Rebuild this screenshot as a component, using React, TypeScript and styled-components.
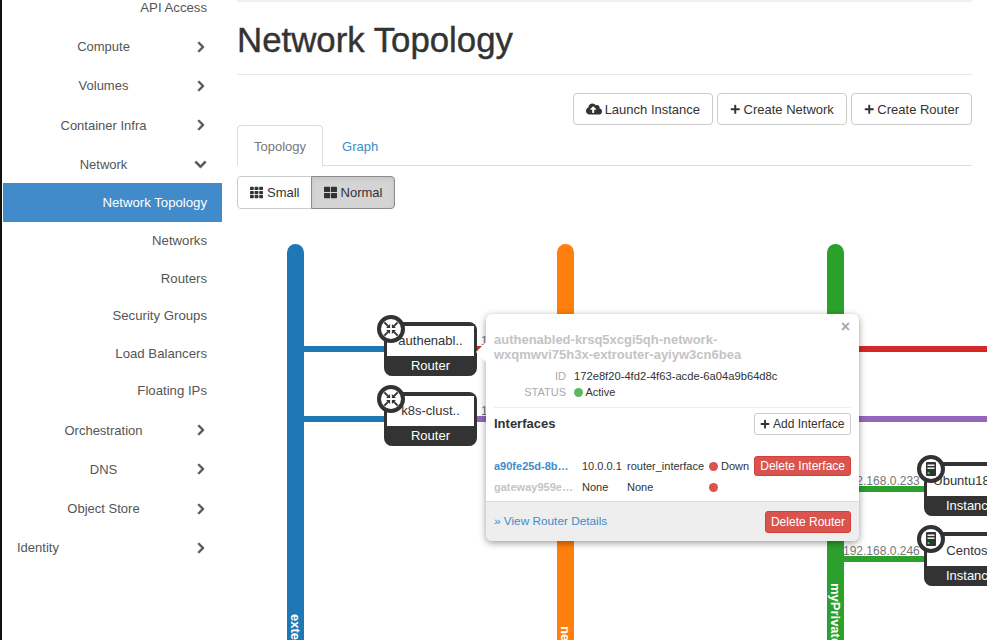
import React from 'react';
import styled, { createGlobalStyle } from 'styled-components';
import {
  FaChevronDown,
  FaChevronRight,
  FaCloudUploadAlt,
  FaPlus,
  FaTh,
  FaThLarge,
} from 'react-icons/fa';

const GlobalStyle = createGlobalStyle`
  html, body {
    margin: 0;
    padding: 0;
    background: #fff;
  }
  body {
    font-family: "Liberation Sans", Arial, sans-serif;
    font-size: 13px;
    color: #333;
  }
`;

const menu = [
  { label: 'API Access', sub: true },
  { label: 'Compute', arrow: 'right' },
  { label: 'Volumes', arrow: 'right' },
  { label: 'Container Infra', arrow: 'right' },
  { label: 'Network', arrow: 'down' },
  { label: 'Network Topology', sub: true, active: true },
  { label: 'Networks', sub: true },
  { label: 'Routers', sub: true },
  { label: 'Security Groups', sub: true },
  { label: 'Load Balancers', sub: true },
  { label: 'Floating IPs', sub: true },
  { label: 'Orchestration', arrow: 'right' },
  { label: 'DNS', arrow: 'right' },
  { label: 'Object Store', arrow: 'right' },
  { label: 'Identity', arrow: 'right', left: true },
];

const RouterIcon = () => (
  <svg width="16" height="16" viewBox="0 0 18 18" fill="#333">
    <g stroke="#333" strokeWidth="2.2">
      <path d="M1.5 1.5 L6 6" />
      <path d="M16.5 1.5 L12 6" />
      <path d="M1.5 16.5 L6 12" />
      <path d="M16.5 16.5 L12 12" />
    </g>
    <path d="M8 3.5 L8 8 L3.5 8 Z" />
    <path d="M10 3.5 L10 8 L14.5 8 Z" />
    <path d="M8 14.5 L8 10 L3.5 10 Z" />
    <path d="M10 14.5 L10 10 L14.5 10 Z" />
  </svg>
);

const InstanceIcon = () => (
  <svg width="10" height="14" viewBox="0 0 10 14">
    <rect x="0" y="0" width="10" height="14" rx="1" fill="#333" />
    <rect x="1.5" y="2.5" width="7" height="1.4" fill="#fff" />
    <rect x="1.5" y="5.5" width="7" height="1.4" fill="#fff" />
    <circle cx="2.6" cy="11.2" r="1.1" fill="#2ecc40" />
  </svg>
);

const Router = ({ name, top }: { name: string; top: number }) => (
  <Node $left={147} $top={top}>
    <NodeBadge>
      <RouterIcon />
    </NodeBadge>
    <NodeName>{name}</NodeName>
    <NodeType>Router</NodeType>
  </Node>
);

const Instance = ({ name, top }: { name: string; top: number }) => (
  <Node $left={687} $top={top}>
    <NodeBadge>
      <InstanceIcon />
    </NodeBadge>
    <NodeName>{name}</NodeName>
    <NodeType>Instance</NodeType>
  </Node>
);

export default function App() {
  return (
    <Page>
      <GlobalStyle />
      <Sidebar>
        {menu.map((item) => (
          <MenuItem
            key={item.label}
            $sub={item.sub}
            $active={item.active}
            $left={item.left}
            $first={item.label === 'API Access'}
          >
            <MenuLabel $sub={item.sub} $left={item.left}>
              {item.label}
            </MenuLabel>
            {item.arrow === 'right' && (
              <Chevron>
                <FaChevronRight size={12} />
              </Chevron>
            )}
            {item.arrow === 'down' && (
              <Chevron>
                <FaChevronDown size={13} />
              </Chevron>
            )}
          </MenuItem>
        ))}
      </Sidebar>

      <Main>
        <Title>Network Topology</Title>
        <Actions>
          <Button>
            <FaCloudUploadAlt size={16} /> Launch Instance
          </Button>
          <Button>
            <FaPlus size={10.5} /> Create Network
          </Button>
          <Button>
            <FaPlus size={10.5} /> Create Router
          </Button>
        </Actions>

        <Tabs>
          <Tab $active>Topology</Tab>
          <Tab>Graph</Tab>
        </Tabs>

        <Toggle>
          <ToggleItem>
            <FaTh size={13} /> Small
          </ToggleItem>
          <ToggleItem $active>
            <FaThLarge size={13} /> Normal
          </ToggleItem>
        </Toggle>

        <Canvas>
          <NetworkBar $left={50} $color="#1f77b4">
            <NetworkName $offset={370}>external</NetworkName>
          </NetworkBar>
          <NetworkBar $left={320} $color="#ff7f0e">
            <NetworkName $offset={382}>network</NetworkName>
          </NetworkBar>
          <NetworkBar $left={590} $color="#2ca02c">
            <NetworkName $offset={339}>myPrivate</NetworkName>
          </NetworkBar>

          <Link $left={67} $top={102} $width={90} $color="#1f77b4" />
          <Link $left={67} $top={172} $width={90} $color="#1f77b4" />
          <Link $left={240} $top={102} $width={520} $color="#d62728" />
          <Link $left={240} $top={172} $width={520} $color="#9467bd" />
          <Link $left={607} $top={242} $width={90} $color="#2ca02c" />
          <Link $left={607} $top={312} $width={90} $color="#2ca02c" />

          <IpLabel $left={244} $top={90}>172.24.4.212</IpLabel>
          <IpLabel $left={244} $top={160}>172.24.4.135</IpLabel>
          <IpLabel $left={606} $top={230}>192.168.0.233</IpLabel>
          <IpLabel $left={606} $top={300}>192.168.0.246</IpLabel>

          <Router name="authenabl.." top={78} />
          <Router name="k8s-clust.." top={148} />
          <Instance name="Ubuntu18.0.." top={218} />
          <Instance name="Centos.." top={288} />

          <Popover>
            <Arrow />
            <Close>×</Close>
            <PopoverBody>
              <PopoverTitle>
                authenabled-krsq5xcgi5qh-network-
                <br />
                wxqmwvi75h3x-extrouter-ayiyw3cn6bea
              </PopoverTitle>
              <Details>
                <DetailLabel>ID</DetailLabel>
                <DetailValue>172e8f20-4fd2-4f63-acde-6a04a9b64d8c</DetailValue>
                <DetailLabel>STATUS</DetailLabel>
                <span>
                  <Dot $color="#5cb85c" /> Active
                </span>
              </Details>
              <InterfacesHeader>
                <InterfacesTitle>Interfaces</InterfacesTitle>
                <SmallButton>
                  <FaPlus size={10} /> Add Interface
                </SmallButton>
              </InterfacesHeader>
              <InterfaceRow>
                <PortName $link>a90fe25d-8b…</PortName>
                <span>10.0.0.1</span>
                <span>router_interface</span>
                <span>
                  <Dot $color="#d9534f" /> Down
                </span>
                <DangerButton>Delete Interface</DangerButton>
              </InterfaceRow>
              <InterfaceRow>
                <PortName>gateway959e…</PortName>
                <span>None</span>
                <span>None</span>
                <span>
                  <Dot $color="#d9534f" />
                </span>
              </InterfaceRow>
            </PopoverBody>
            <PopoverFooter>
              <FooterLink>» View Router Details</FooterLink>
              <DangerButton $tall>Delete Router</DangerButton>
            </PopoverFooter>
          </Popover>
        </Canvas>
      </Main>
    </Page>
  );
}

const Page = styled.div`
  display: flex;
  width: 987px;
  height: 640px;
  overflow: hidden;
  position: relative;
`;

const Sidebar = styled.nav`
  flex: 0 0 222px;
  box-sizing: border-box;
  margin-top: -11px;
  padding-left: 1px;
  border-left: 2px solid #111;
`;

const MenuItem = styled.div<{
  $sub?: boolean;
  $active?: boolean;
  $left?: boolean;
  $first?: boolean;
}>`
  display: flex;
  align-items: center;
  box-sizing: border-box;
  height: ${(p) => (p.$first ? '37px' : p.$active ? '39px' : p.$sub ? '37.5px' : '39.25px')};
  padding: ${(p) => (p.$sub ? '0' : '2px')} 15px 0 ${(p) => (p.$left ? '14px' : '15px')};
  background: ${(p) => (p.$active ? '#428bca' : 'transparent')};
  color: ${(p) => (p.$active ? '#fff' : '#555')};
`;

const MenuLabel = styled.span<{ $sub?: boolean; $left?: boolean }>`
  flex: 1;
  text-align: ${(p) => (p.$sub ? 'right' : p.$left ? 'left' : 'center')};
  font-size: ${(p) => (p.$sub ? '13.2px' : '13px')};
`;

const Chevron = styled.span`
  display: flex;
  justify-content: flex-end;
  width: 18px;
  color: #555;

  svg {
    stroke: #555;
    stroke-width: 24px;
  }
`;

const Main = styled.main`
  flex: 1;
  min-width: 0;
  padding: 0 15px;
`;

const Title = styled.h1`
  box-sizing: border-box;
  margin: 0;
  height: 75px;
  line-height: 76px;
  font-size: 34.8px;
  font-weight: 400;
  color: #333;
  -webkit-text-stroke: 0.4px #333;
  border-top: 2px solid #f0f0f0;
  border-bottom: 1px solid #e8e8e8;
`;

const Actions = styled.div`
  display: flex;
  justify-content: flex-end;
  gap: 4px;
  margin-top: 18px;
`;

const Button = styled.button`
  display: inline-flex;
  align-items: center;
  justify-content: center;
  gap: 3px;
  height: 32px;
  padding: 0 12px;
  background: #fff;
  border: 1px solid #ccc;
  border-radius: 4px;
  color: #333;
  font: inherit;
`;

const Tabs = styled.div`
  display: flex;
  box-sizing: border-box;
  height: 41px;
  border-bottom: 1px solid #ddd;
`;

const Tab = styled.div<{ $active?: boolean }>`
  display: flex;
  align-items: center;
  padding: 2px ${(p) => (p.$active ? '16px' : '18px')} 0;
  height: 41px;
  box-sizing: border-box;
  color: ${(p) => (p.$active ? '#777' : '#428bca')};
  background: ${(p) => (p.$active ? '#fff' : 'transparent')};
  border: 1px solid ${(p) => (p.$active ? '#ddd' : 'transparent')};
  border-bottom-color: ${(p) => (p.$active ? '#fff' : 'transparent')};
  border-radius: 4px 4px 0 0;
`;

const Toggle = styled.div`
  display: flex;
  width: fit-content;
  margin-top: 10px;
`;

const ToggleItem = styled.div<{ $active?: boolean }>`
  display: flex;
  align-items: center;
  gap: 4px;
  box-sizing: border-box;
  height: 33px;
  padding: 0 ${(p) => (p.$active ? '12px' : '11px')} 0 12px;
  color: #333;
  background: ${(p) => (p.$active ? '#d4d4d4' : '#fff')};
  border: 1px solid ${(p) => (p.$active ? '#8c8c8c' : '#ccc')};
  border-radius: ${(p) => (p.$active ? '0 4px 4px 0' : '4px 0 0 4px')};
  margin-left: ${(p) => (p.$active ? '-1px' : '0')};
  box-shadow: ${(p) => (p.$active ? 'inset 0 2px 4px rgba(0,0,0,.08)' : 'none')};
`;

const Canvas = styled.div`
  position: relative;
  margin-top: 35px;
  height: 396px;
`;

const NetworkBar = styled.div<{ $left: number; $color: string }>`
  position: absolute;
  left: ${(p) => p.$left}px;
  top: 0;
  width: 17px;
  height: 460px;
  border-radius: 8.5px 8.5px 0 0;
  background: ${(p) => p.$color};
`;

const NetworkName = styled.span<{ $offset: number }>`
  position: absolute;
  top: ${(p) => p.$offset}px;
  left: 1px;
  writing-mode: vertical-rl;
  color: #fff;
  font-weight: 700;
  font-size: 13px;
  line-height: 15px;
`;

const Link = styled.div<{ $left: number; $top: number; $width: number; $color: string }>`
  position: absolute;
  left: ${(p) => p.$left}px;
  top: ${(p) => p.$top}px;
  width: ${(p) => p.$width}px;
  height: 6px;
  background: ${(p) => p.$color};
`;

const IpLabel = styled.span<{ $left: number; $top: number }>`
  position: absolute;
  left: ${(p) => p.$left}px;
  top: ${(p) => p.$top}px;
  font-size: 12px;
  line-height: 14px;
  color: #777;
`;

const Node = styled.div<{ $left: number; $top: number }>`
  position: absolute;
  left: ${(p) => p.$left}px;
  top: ${(p) => p.$top}px;
  box-sizing: border-box;
  width: 93px;
  height: 54px;
  border: 3px solid #333;
  border-top-width: 4px;
  border-bottom: 0;
  border-radius: 8px;
  background: #333;
  display: flex;
  flex-direction: column;
`;

const NodeBadge = styled.div`
  position: absolute;
  left: -10px;
  top: -11px;
  box-sizing: border-box;
  width: 28px;
  height: 28px;
  border: 4px solid #333;
  border-radius: 50%;
  background: #fff;
  display: flex;
  align-items: center;
  justify-content: center;
`;

const NodeName = styled.div`
  height: 30px;
  line-height: 30px;
  background: #fff;
  color: #333;
  text-align: center;
  white-space: nowrap;
  overflow: hidden;
`;

const NodeType = styled.div`
  flex: 1;
  line-height: 20px;
  color: #fff;
  text-align: center;
`;

const Popover = styled.div`
  position: absolute;
  left: 249px;
  top: 70px;
  width: 373px;
  height: 227px;
  box-sizing: border-box;
  background: #fff;
  border-radius: 6px;
  box-shadow: 0 2px 7px rgba(0, 0, 0, 0.4);
  display: flex;
  flex-direction: column;
  font-size: 11px;
  color: #333;
`;

const Arrow = styled.div`
  position: absolute;
  left: -10px;
  top: 28px;
  width: 0;
  height: 0;
  border-style: solid;
  border-width: 10px 10px 10px 0;
  border-color: transparent #fff transparent transparent;
`;

const Close = styled.span`
  position: absolute;
  right: 9px;
  top: 5px;
  color: #aaa;
  font-size: 16px;
  font-weight: 700;
  line-height: 16px;
`;

const PopoverBody = styled.div`
  flex: 1;
  padding: 18px 8px 0;
`;

const PopoverTitle = styled.div`
  font-size: 13px;
  font-weight: 700;
  line-height: 15px;
  color: #c4c4c4;
`;

const Details = styled.div`
  display: grid;
  grid-template-columns: 72px 1fr;
  column-gap: 8px;
  row-gap: 2px;
  margin-top: 7px;
  padding-bottom: 8px;
  line-height: 14px;
  border-bottom: 1px solid #eee;
`;

const DetailLabel = styled.span`
  text-align: right;
  color: #aaa;
  font-weight: 400;
`;

const DetailValue = styled.span`
  font-size: 11.2px;
`;

const Dot = styled.span<{ $color: string }>`
  display: inline-block;
  width: 9px;
  height: 9px;
  border-radius: 50%;
  vertical-align: -1px;
  background: ${(p) => p.$color};
`;

const InterfacesHeader = styled.div`
  display: flex;
  align-items: center;
  justify-content: space-between;
  margin-top: 5px;
  margin-bottom: 20px;
`;

const InterfacesTitle = styled.span`
  font-size: 13px;
  font-weight: 700;
  margin-top: -2px;
`;

const SmallButton = styled.button`
  display: inline-flex;
  align-items: center;
  gap: 3px;
  box-sizing: border-box;
  width: 97px;
  height: 22px;
  padding: 0 5px;
  background: #fff;
  border: 1px solid #ccc;
  border-radius: 3px;
  color: #333;
  font: inherit;
  font-size: 12px;
  white-space: nowrap;
`;

const InterfaceRow = styled.div`
  display: grid;
  grid-template-columns: 88px 45px 82px 45px 97px;
  align-items: center;
  height: 21px;
  white-space: nowrap;
`;

const PortName = styled.span<{ $link?: boolean }>`
  font-weight: 700;
  color: ${(p) => (p.$link ? '#428bca' : '#c4c4c4')};
`;

const DangerButton = styled.button<{ $tall?: boolean }>`
  justify-self: end;
  box-sizing: border-box;
  height: ${(p) => (p.$tall ? '22px' : '20px')};
  padding: 0 5px;
  background: #d9534f;
  border: 1px solid #d43f3a;
  border-radius: 3px;
  color: #fff;
  font: inherit;
  font-size: 12px;
  white-space: nowrap;
`;

const PopoverFooter = styled.div`
  display: flex;
  align-items: center;
  justify-content: space-between;
  height: 39px;
  padding: 0 8px;
  background: #eee;
  border-top: 1px solid #ddd;
  border-radius: 0 0 6px 6px;
`;

const FooterLink = styled.span`
  color: #428bca;
  font-size: 11.8px;
  margin-top: -2px;
`;
